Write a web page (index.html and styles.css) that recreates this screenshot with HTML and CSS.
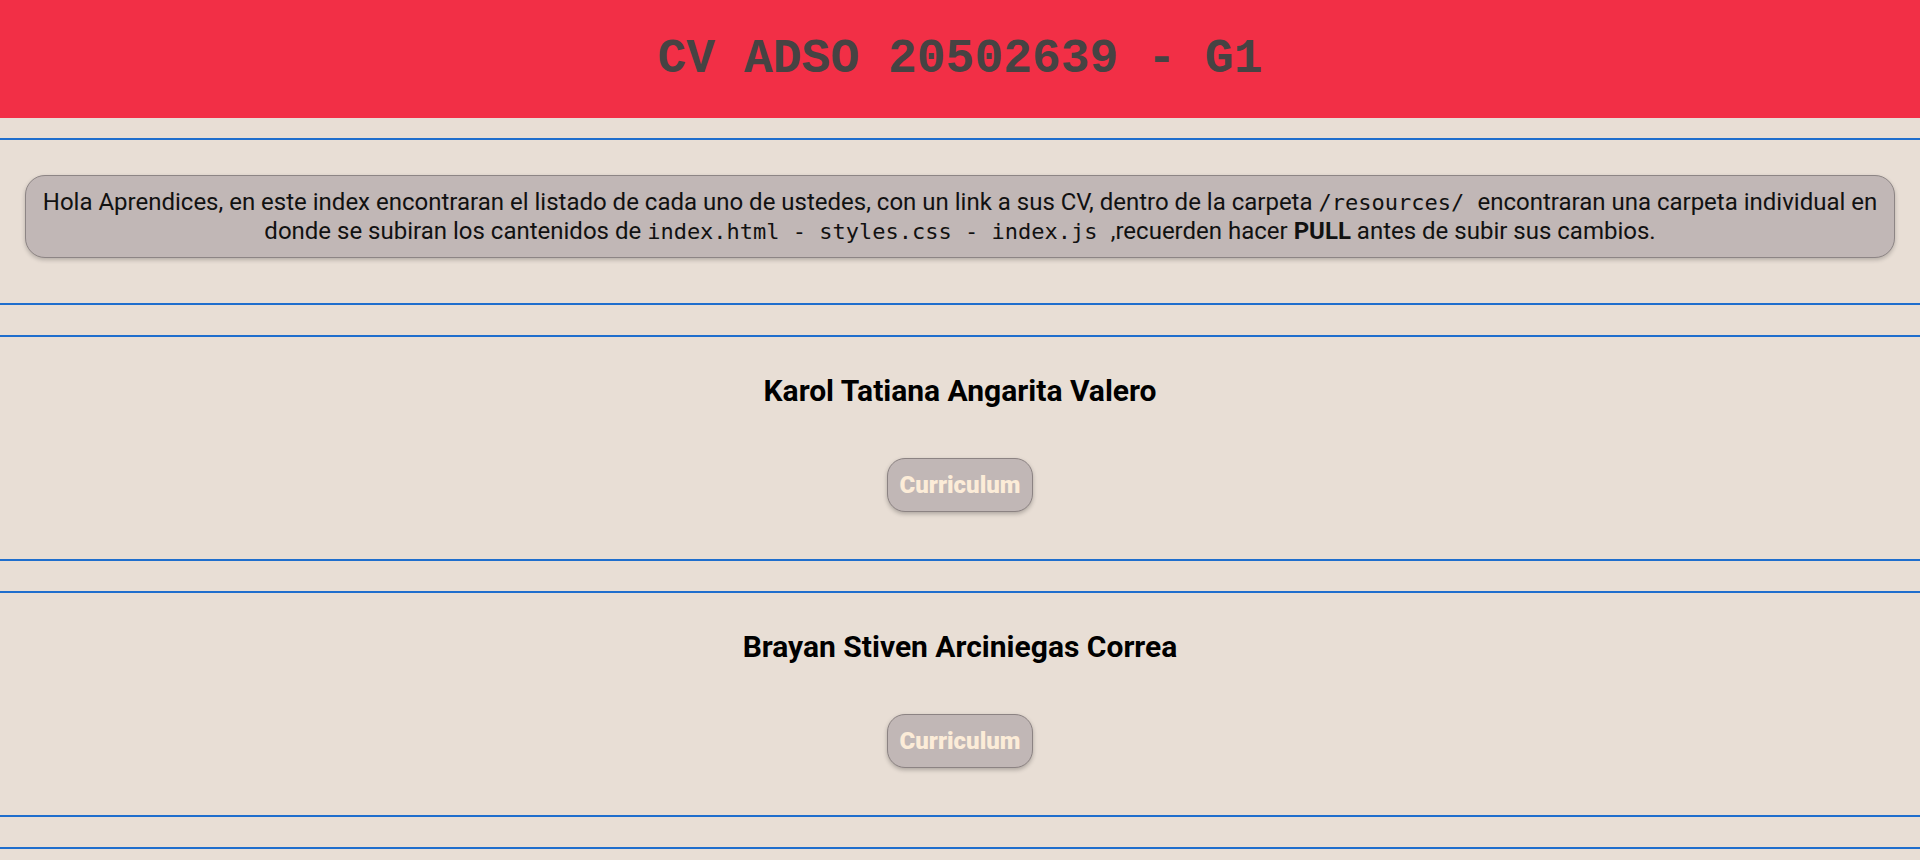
FILE: index.html
```html
<!DOCTYPE html>
<html lang="es">
<head>
<meta charset="utf-8">
<title>CV ADSO 20502639 - G1</title>
<link rel="stylesheet" href="styles.css">
</head>
<body>
<header class="top">
  <h1 class="title">CV ADSO 20502639 - G1</h1>
</header>
<main class="list">
  <section class="block intro">
    <p class="notice">Hola Aprendices, en este index encontraran el listado de cada uno de ustedes, con un link a sus CV, dentro de la carpeta <code class="mono">/resources/ </code> encontraran una carpeta individual en donde se subiran los cantenidos de <code class="mono">index.html - styles.css - index.js&nbsp;</code>,recuerden hacer <strong>PULL</strong> antes de subir sus cambios.</p>
  </section>
  <section class="block student">
    <h2 class="name">Karol Tatiana Angarita Valero</h2>
    <a class="cv-btn" href="#">Curriculum</a>
  </section>
  <section class="block student">
    <h2 class="name">Brayan Stiven Arciniegas Correa</h2>
    <a class="cv-btn" href="#">Curriculum</a>
  </section>
  <section class="block student">
    <h2 class="name">Aprendiz ADSO</h2>
    <a class="cv-btn" href="#">Curriculum</a>
  </section>
</main>
</body>
</html>
```
FILE: styles.css
```css
html, body {
  margin: 0;
  padding: 0;
}
body {
  background: #e8ded5;
  font-family: Roboto, "Liberation Sans", sans-serif;
  color: #000;
}
.top {
  background: #f22f46;
  height: 118px;
  display: flex;
  align-items: center;
  justify-content: center;
}
.title {
  margin: 0;
  font-family: "Liberation Mono", "Courier New", monospace;
  font-weight: bold;
  font-size: 48px;
  color: #464343;
  line-height: 1;
}
.list {
  padding-top: 20px;
}
.block {
  border-top: 2px solid #1f6ecd;
  border-bottom: 2px solid #1f6ecd;
  margin: 0 0 30px 0;
  text-align: center;
}
.intro {
  padding: 35px 25px 45px;
}
.notice {
  margin: 0;
  background: #c1b7b6;
  border: 1px solid #8d8585;
  border-radius: 20px;
  box-shadow: 0 2px 4px rgba(0, 0, 0, 0.22);
  padding: 12px 8px;
  font-size: 24px;
  line-height: 28.7px;
  color: #111;
}
.mono {
  font-family: "DejaVu Sans Mono", "Liberation Mono", monospace;
  font-size: 22px;
  line-height: 1;
}
.notice strong {
  font-weight: bold;
}
.student {
  padding: 36px 0 47px;
  display: flex;
  flex-direction: column;
  align-items: center;
}
.name {
  margin: 0 0 50px;
  font-size: 30px;
  font-weight: bold;
  line-height: normal;
  color: #000;
}
.cv-btn {
  display: inline-block;
  padding: 12px;
  font-size: 24px;
  font-weight: 900;
  line-height: 28px;
  color: #fcecd8;
  background: #c1b7b6;
  border: 1px solid #8c8383;
  border-radius: 18px;
  box-shadow: 0 2px 4px rgba(0, 0, 0, 0.25);
  text-decoration: none;
}
```
